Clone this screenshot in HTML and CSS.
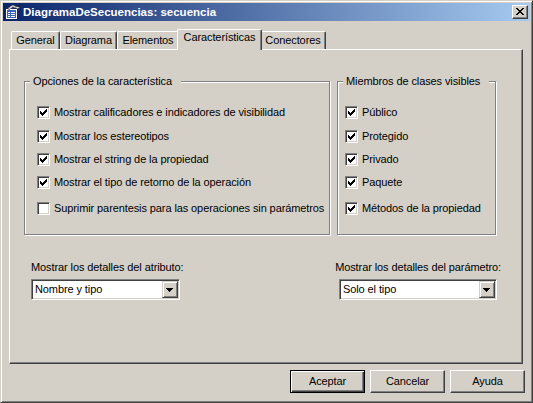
FILE: index.html
```html
<!DOCTYPE html>
<html lang="es">
<head>
<meta charset="utf-8">
<title>DiagramaDeSecuencias: secuencia</title>
<link rel="stylesheet" href="styles.css">
</head>
<body>
<div class="window">
  <div class="titlebar">
    <svg class="app-icon" width="16" height="16" viewBox="0 0 16 16" shape-rendering="crispEdges">
      <rect x="1" y="5" width="11" height="10" fill="#fff"/>
      <rect x="2" y="6" width="9" height="8" fill="#3c64b4"/>
      <rect x="3" y="8" width="2" height="1" fill="#fff"/>
      <rect x="6" y="8" width="4" height="1" fill="#fff"/>
      <rect x="3" y="10" width="2" height="1" fill="#fff"/>
      <rect x="6" y="10" width="4" height="1" fill="#fff"/>
      <rect x="3" y="12" width="2" height="1" fill="#fff"/>
      <rect x="6" y="12" width="4" height="1" fill="#fff"/>
      <path d="M3 4L8 1L12 3L14 1L15 2L13 5L8 3L4 6Z" fill="#c8c8c8" stroke="#606060" stroke-width="0.6"/>
      <rect x="13" y="1" width="2" height="2" fill="#202020"/>
    </svg>
    <span class="title">DiagramaDeSecuencias: secuencia</span>
    <div class="close-btn">
      <svg width="8" height="7" viewBox="0 0 8 7" shape-rendering="crispEdges"><path d="M0 0h2v1H0zM6 0h2v1H6zM1 1h2v1H1zM5 1h2v1H5zM2 2h4v1H2zM3 3h2v1H3zM2 4h4v1H2zM1 5h2v1H1zM5 5h2v1H5zM0 6h2v1H0zM6 6h2v1H6z" fill="#000"/></svg>
    </div>
  </div>
  <div class="content">
    <div class="tabs">
      <div class="tab tab-general">General</div>
      <div class="tab tab-diagrama">Diagrama</div>
      <div class="tab tab-elementos">Elementos</div>
      <div class="tab tab-caract active">Características</div>
      <div class="tab tab-conect">Conectores</div>
    </div>
    <div class="panel">
      <div class="groups">
        <div class="group group-options">
          <span class="group-title">Opciones de la característica</span>
          <div class="checks">
            <div class="check"><span class="box"><svg width="7" height="7" viewBox="0 0 7 7" shape-rendering="crispEdges"><path d="M0 2h1v3H0zM1 3h1v3H1zM2 4h1v3H2zM3 3h1v3H3zM4 2h1v3H4zM5 1h1v3H5zM6 0h1v3H6z" fill="#000"/></svg></span>Mostrar calificadores e indicadores de visibilidad</div>
            <div class="check"><span class="box"><svg width="7" height="7" viewBox="0 0 7 7" shape-rendering="crispEdges"><path d="M0 2h1v3H0zM1 3h1v3H1zM2 4h1v3H2zM3 3h1v3H3zM4 2h1v3H4zM5 1h1v3H5zM6 0h1v3H6z" fill="#000"/></svg></span>Mostrar los estereotipos</div>
            <div class="check"><span class="box"><svg width="7" height="7" viewBox="0 0 7 7" shape-rendering="crispEdges"><path d="M0 2h1v3H0zM1 3h1v3H1zM2 4h1v3H2zM3 3h1v3H3zM4 2h1v3H4zM5 1h1v3H5zM6 0h1v3H6z" fill="#000"/></svg></span>Mostrar el string de la propiedad</div>
            <div class="check"><span class="box"><svg width="7" height="7" viewBox="0 0 7 7" shape-rendering="crispEdges"><path d="M0 2h1v3H0zM1 3h1v3H1zM2 4h1v3H2zM3 3h1v3H3zM4 2h1v3H4zM5 1h1v3H5zM6 0h1v3H6z" fill="#000"/></svg></span>Mostrar el tipo de retorno de la operación</div>
            <div class="check check-last"><span class="box"></span>Suprimir parentesis para las operaciones sin parámetros</div>
          </div>
        </div>
        <div class="group group-members">
          <span class="group-title">Miembros de clases visibles</span>
          <div class="checks">
            <div class="check"><span class="box"><svg width="7" height="7" viewBox="0 0 7 7" shape-rendering="crispEdges"><path d="M0 2h1v3H0zM1 3h1v3H1zM2 4h1v3H2zM3 3h1v3H3zM4 2h1v3H4zM5 1h1v3H5zM6 0h1v3H6z" fill="#000"/></svg></span>Público</div>
            <div class="check"><span class="box"><svg width="7" height="7" viewBox="0 0 7 7" shape-rendering="crispEdges"><path d="M0 2h1v3H0zM1 3h1v3H1zM2 4h1v3H2zM3 3h1v3H3zM4 2h1v3H4zM5 1h1v3H5zM6 0h1v3H6z" fill="#000"/></svg></span>Protegido</div>
            <div class="check"><span class="box"><svg width="7" height="7" viewBox="0 0 7 7" shape-rendering="crispEdges"><path d="M0 2h1v3H0zM1 3h1v3H1zM2 4h1v3H2zM3 3h1v3H3zM4 2h1v3H4zM5 1h1v3H5zM6 0h1v3H6z" fill="#000"/></svg></span>Privado</div>
            <div class="check"><span class="box"><svg width="7" height="7" viewBox="0 0 7 7" shape-rendering="crispEdges"><path d="M0 2h1v3H0zM1 3h1v3H1zM2 4h1v3H2zM3 3h1v3H3zM4 2h1v3H4zM5 1h1v3H5zM6 0h1v3H6z" fill="#000"/></svg></span>Paquete</div>
            <div class="check check-last"><span class="box"><svg width="7" height="7" viewBox="0 0 7 7" shape-rendering="crispEdges"><path d="M0 2h1v3H0zM1 3h1v3H1zM2 4h1v3H2zM3 3h1v3H3zM4 2h1v3H4zM5 1h1v3H5zM6 0h1v3H6z" fill="#000"/></svg></span>Métodos de la propiedad</div>
          </div>
        </div>
      </div>
      <div class="details">
        <div class="field">
          <div class="field-label">Mostrar los detalles del atributo:</div>
          <div class="select select-attr">
            <span class="select-value">Nombre y tipo</span>
            <span class="select-btn"><svg width="7" height="4" viewBox="0 0 7 4" shape-rendering="crispEdges"><path d="M0 0h7v1H0zM1 1h5v1H1zM2 2h3v1H2zM3 3h1v1H3z" fill="#000"/></svg></span>
          </div>
        </div>
        <div class="field field-right">
          <div class="field-label">Mostrar los detalles del parámetro:</div>
          <div class="select select-param">
            <span class="select-value">Solo el tipo</span>
            <span class="select-btn"><svg width="7" height="4" viewBox="0 0 7 4" shape-rendering="crispEdges"><path d="M0 0h7v1H0zM1 1h5v1H1zM2 2h3v1H2zM3 3h1v1H3z" fill="#000"/></svg></span>
          </div>
        </div>
      </div>
    </div>
    <div class="buttons">
      <div class="btn btn-default"><span class="btn-face">Aceptar</span></div>
      <div class="btn"><span class="btn-face">Cancelar</span></div>
      <div class="btn"><span class="btn-face">Ayuda</span></div>
    </div>
  </div>
</div>
</body>
</html>
```
FILE: styles.css
```css
* { box-sizing: border-box; }
html, body { margin: 0; padding: 0; }
body {
  background: #d4d0c8;
  font-family: "Liberation Sans", Arial, sans-serif;
  font-size: 11px;
  letter-spacing: -0.1px;
  color: #000;
}
.window {
  width: 533px;
  height: 403px;
  background: #d4d0c8;
  border: 1px solid;
  border-color: #d4d0c8 #404040 #404040 #d4d0c8;
  box-shadow: inset 1px 1px 0 #fff, inset -1px -1px 0 #808080;
  padding: 2px;
  display: flex;
  flex-direction: column;
}
.titlebar {
  height: 18px;
  flex: none;
  background: linear-gradient(to right, #0a246a, #a6caf0);
  display: flex;
  align-items: center;
  padding-left: 2px;
}
.app-icon { flex: none; display: block; }
.title {
  color: #fff;
  font-weight: bold;
  font-size: 11.5px;
  letter-spacing: 0;
  margin-left: 2px;
  line-height: 14px;
}
.close-btn {
  margin-left: auto;
  margin-right: 2px;
  width: 16px;
  height: 14px;
  background: #d4d0c8;
  border: 1px solid;
  border-color: #fff #404040 #404040 #fff;
  box-shadow: inset -1px -1px 0 #808080;
  display: flex;
  align-items: center;
  justify-content: center;
  padding: 0 1px 1px 0;
}
.close-btn svg { display: block; }
.content {
  flex: 1;
  display: flex;
  flex-direction: column;
  padding: 0 7px 7px 6px;
}
.tabs {
  margin-top: 8px;
  height: 20px;
  display: flex;
  align-items: flex-end;
  padding-left: 2px;
}
.tab {
  position: relative;
  height: 18px;
  line-height: 16px;
  text-align: center;
  border: 1px solid;
  border-bottom: none;
  border-color: #fff #404040 #fff #fff;
  border-radius: 2px 2px 0 0;
  box-shadow: inset -1px 0 0 #808080;
  flex: none;
}
.tab-general { width: 49px; }
.tab-diagrama { width: 57px; }
.tab-elementos { width: 62px; }
.tab-caract { width: 85px; }
.tab-conect { width: 66px; }
.tab.active {
  height: 21px;
  margin: 0 -2px -1px;
  line-height: 15px;
  z-index: 1;
  background: #d4d0c8;
}
.panel {
  height: 315px;
  flex: none;
  border: 1px solid;
  border-color: #fff #404040 #404040 #fff;
  box-shadow: inset -1px -1px 0 #808080;
  display: flex;
  flex-direction: column;
  padding: 0 21px;
}
.groups {
  display: flex;
  gap: 7px;
  margin: 31px 0 0 -7px;
}
.group {
  border: 1px solid #808080;
  box-shadow: inset 1px 1px 0 #fff, 1px 1px 0 #fff;
  display: flex;
  flex-direction: column;
  align-items: flex-start;
  padding-bottom: 19px;
}
.group-options { width: 306px; padding-left: 12px; }
.group-members { width: 159px; padding-left: 7px; }
.group-title {
  line-height: 13px;
  margin-top: -7px;
  background: #d4d0c8;
  padding: 0 9px 0 3px;
  white-space: nowrap;
}
.group-options .group-title { margin-left: -7px; }
.group-members .group-title { margin-left: -2px; }
.checks {
  margin-top: 18px;
  display: flex;
  flex-direction: column;
  gap: 10px;
}
.check {
  display: flex;
  align-items: center;
  height: 13px;
  line-height: 13px;
  white-space: nowrap;
}
.check:first-child { margin-bottom: 1px; }
.check-last { margin-top: 3px; }
.box {
  width: 13px;
  height: 13px;
  flex: none;
  margin-right: 4px;
  background: #fff;
  border: 1px solid;
  border-color: #808080 #fff #fff #808080;
  box-shadow: inset 1px 1px 0 #404040, inset -1px -1px 0 #d4d0c8;
  display: flex;
  align-items: center;
  justify-content: center;
}
.box svg { display: block; }
.details {
  display: flex;
  justify-content: space-between;
  margin-top: 26px;
}
.field {
  display: flex;
  flex-direction: column;
  align-items: flex-start;
}
.field-right { align-items: flex-end; }
.field-label {
  line-height: 13px;
  white-space: nowrap;
  margin-bottom: 5px;
}
.select {
  height: 21px;
  background: #fff;
  border: 1px solid;
  border-color: #808080 #fff #fff #808080;
  box-shadow: inset 1px 1px 0 #404040, inset -1px -1px 0 #d4d0c8;
  display: flex;
  align-items: center;
  padding: 1px 1px 1px 3px;
}
.select-attr { width: 149px; }
.select-param { width: 158px; margin-right: 4px; }
.select-value { flex: 1; line-height: 13px; white-space: nowrap; }
.select-btn {
  width: 16px;
  height: 17px;
  flex: none;
  background: #d4d0c8;
  border: 1px solid;
  border-color: #d4d0c8 #404040 #404040 #d4d0c8;
  box-shadow: inset 1px 1px 0 #fff, inset -1px -1px 0 #808080;
  display: flex;
  align-items: center;
  justify-content: center;
  padding-right: 1px;
}
.select-btn svg { display: block; }
.buttons {
  display: flex;
  justify-content: flex-end;
  gap: 5px;
  margin-top: 6px;
  margin-right: -2px;
}
.btn {
  width: 75px;
  height: 23px;
  border: 1px solid;
  border-color: #fff #404040 #404040 #fff;
  box-shadow: inset -1px -1px 0 #808080;
  display: flex;
  align-items: center;
  justify-content: center;
}
.btn-default {
  border-color: #000;
  box-shadow: inset 1px 1px 0 #fff, inset -1px -1px 0 #404040, inset -2px -2px 0 #808080;
}
.btn-face { line-height: 13px; }
```
